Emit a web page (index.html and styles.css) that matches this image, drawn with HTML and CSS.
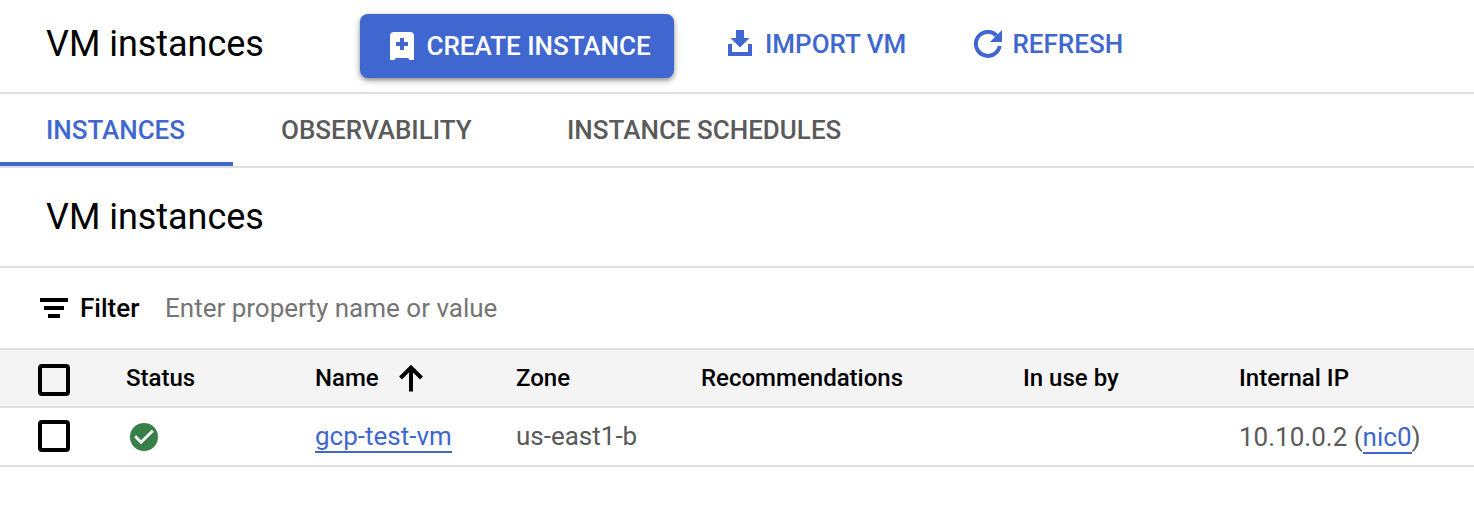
FILE: index.html
```html
<!DOCTYPE html>
<html lang="en">
<head>
<meta charset="utf-8">
<title>VM instances</title>
<link rel="stylesheet" href="styles.css">
</head>
<body>
<header class="topbar">
  <h1 class="title topbar-title">VM instances</h1>
  <button class="create">
    <svg class="create-icon" width="24" height="28" viewBox="0 0 24 28"><path fill="currentColor" fill-rule="evenodd" d="M4 0H20Q24 0 24 4V28H20Q18.500 28 18.500 26H5.500Q5.500 28 4 28H0V4Q0 0 4 0ZM10 6V10H6V14H10V18H14V14H18V10H14V6Z"/></svg>
    <span class="create-label">CREATE INSTANCE</span>
  </button>
  <button class="action import">
    <svg width="24" height="26" viewBox="0 0 24 26"><path fill="currentColor" d="M8 0H16V8H21.500L12 17.500L2.500 8H8ZM0 14H4V22H20V14H24V26H0Z"/></svg>
    <span class="import-label">IMPORT VM</span>
  </button>
  <button class="action refresh">
    <svg width="28" height="28" viewBox="0 0 28 28"><path fill="none" stroke="currentColor" stroke-width="4" d="M22.500 5.500A12 12 0 1 0 25.700 16"/><path fill="currentColor" d="M28 0V12H16Z"/></svg>
    <span class="refresh-label">REFRESH</span>
  </button>
</header>
<nav class="tabs">
  <a class="tab active"><span>INSTANCES</span></a>
  <a class="tab observability"><span>OBSERVABILITY</span></a>
  <a class="tab schedules"><span>INSTANCE SCHEDULES</span></a>
</nav>
<section class="section-head"><h2 class="title">VM instances</h2></section>
<div class="filter">
  <svg width="28" height="20" viewBox="0 0 28 20"><path fill="currentColor" d="M0 0H28V4H0ZM4 8H24V12H4ZM8 16H20V20H8Z"/></svg>
  <span class="filter-label">Filter</span>
  <span class="placeholder">Enter property name or value</span>
</div>
<main class="table">
  <div class="row head">
    <span class="check"></span>
    <span class="t-status">Status</span>
    <span class="name-head"><span class="t-name">Name</span><svg width="24" height="28" viewBox="0 0 24 28"><path fill="none" stroke="currentColor" stroke-width="4" d="M1.500 14L12 3.500L22.500 14M12 3.500V27.500"/></svg></span>
    <span class="t-zone">Zone</span>
    <span class="t-rec">Recommendations</span>
    <span class="t-use">In use by</span>
    <span class="t-ip">Internal IP</span>
  </div>
  <div class="row body">
    <span class="check"></span>
    <span class="status"><svg width="28" height="28" viewBox="0 0 28 28"><circle cx="14" cy="14" r="14" fill="#397f49"/><path fill="none" stroke="#fff" stroke-width="2.800" d="M5.200 13.200L11 19.300L22.800 7.800"/></svg></span>
    <span><a class="link name">gcp-test-vm</a></span>
    <span class="zone">us-east1-b</span>
    <span></span>
    <span></span>
    <span class="ip">10.10.0.2 (<a class="link nic">nic0</a>)</span>
  </div>
</main>
</body>
</html>
```

FILE: styles.css
```css
* { box-sizing: border-box; }
body {
  margin: 0;
  background: #fff;
  color: #000;
  font-family: Roboto, sans-serif;
  font-size: 26px;
  line-height: 32px;
  white-space: nowrap;
  overflow: hidden;
}
svg { display: block; flex: none; }
button {
  border: 0;
  background: none;
  padding: 0;
  font: inherit;
  font-weight: 500;
}
.title { margin: 0; font-size: 36px; font-weight: 400; line-height: 44px; letter-spacing: -.03px; }
.topbar {
  height: 94px;
  border-bottom: 2px solid #e0e0e0;
  display: flex;
  align-items: flex-start;
  padding-left: 46px;
}
.topbar-title { width: 314px; padding-top: 22px; }
.create {
  width: 314px;
  height: 64px;
  margin: 14px 54px 0 0;
  padding-left: 30px;
  display: flex;
  align-items: center;
  gap: 12.500px;
  color: #fff;
  background: #4067d0;
  border-radius: 8px;
  box-shadow: 0 2px 4px rgba(0, 0, 0, .36), 0 3px 8px rgba(0, 0, 0, .16);
}
.action { display: flex; align-items: center; height: 32px; margin-top: 28px; color: #4067d0; }
.import { width: 246px; gap: 13px; }
.import svg { margin-bottom: 2px; }
.refresh { gap: 10.500px; }
.tabs {
  height: 74px;
  border-bottom: 2px solid #e0e0e0;
  display: flex;
  font-weight: 500;
  color: #5a5a5a;
}
.tab { height: 72px; padding: 20px 0 0 47px; }
.active { width: 233px; padding-left: 46px; letter-spacing: -.04px; color: #4067d0; border-bottom: 4px solid #4067d0; }
.observability { width: 287px; padding-left: 48px; }
.section-head { height: 100px; padding: 27px 0 0 46px; border-bottom: 2px solid #e0e0e0; }
.filter {
  height: 82px;
  border-bottom: 2px solid #e0e0e0;
  padding-left: 40px;
  display: flex;
  align-items: center;
}
.filter-label { width: 85px; margin-left: 12px; font-weight: 500; }
.placeholder { color: #757575; }
.row {
  display: grid;
  grid-template-columns: 88px 189px 201px 185px 322px 216px 1fr;
  align-items: center;
  padding-left: 38px;
  border-bottom: 2px solid #e0e0e0;
}
.head { height: 58px; background: #f4f4f4; font-size: 24px; font-weight: 500; }
.body { height: 59px; padding-bottom: 1px; color: #5a5a5a; }
.check { width: 32px; height: 32px; border: 4px solid #000; border-radius: 4px; }
.head .check { margin-top: 4px; }
.name-head { display: flex; align-items: center; }
.t-name { width: 84px; }
.status { padding: 2px 0 0 4px; }
.ip { padding-top: 2px; }
.link { display: inline-block; height: 33px; color: #4067d0; border-bottom: 2px solid #4067d0; }
```
